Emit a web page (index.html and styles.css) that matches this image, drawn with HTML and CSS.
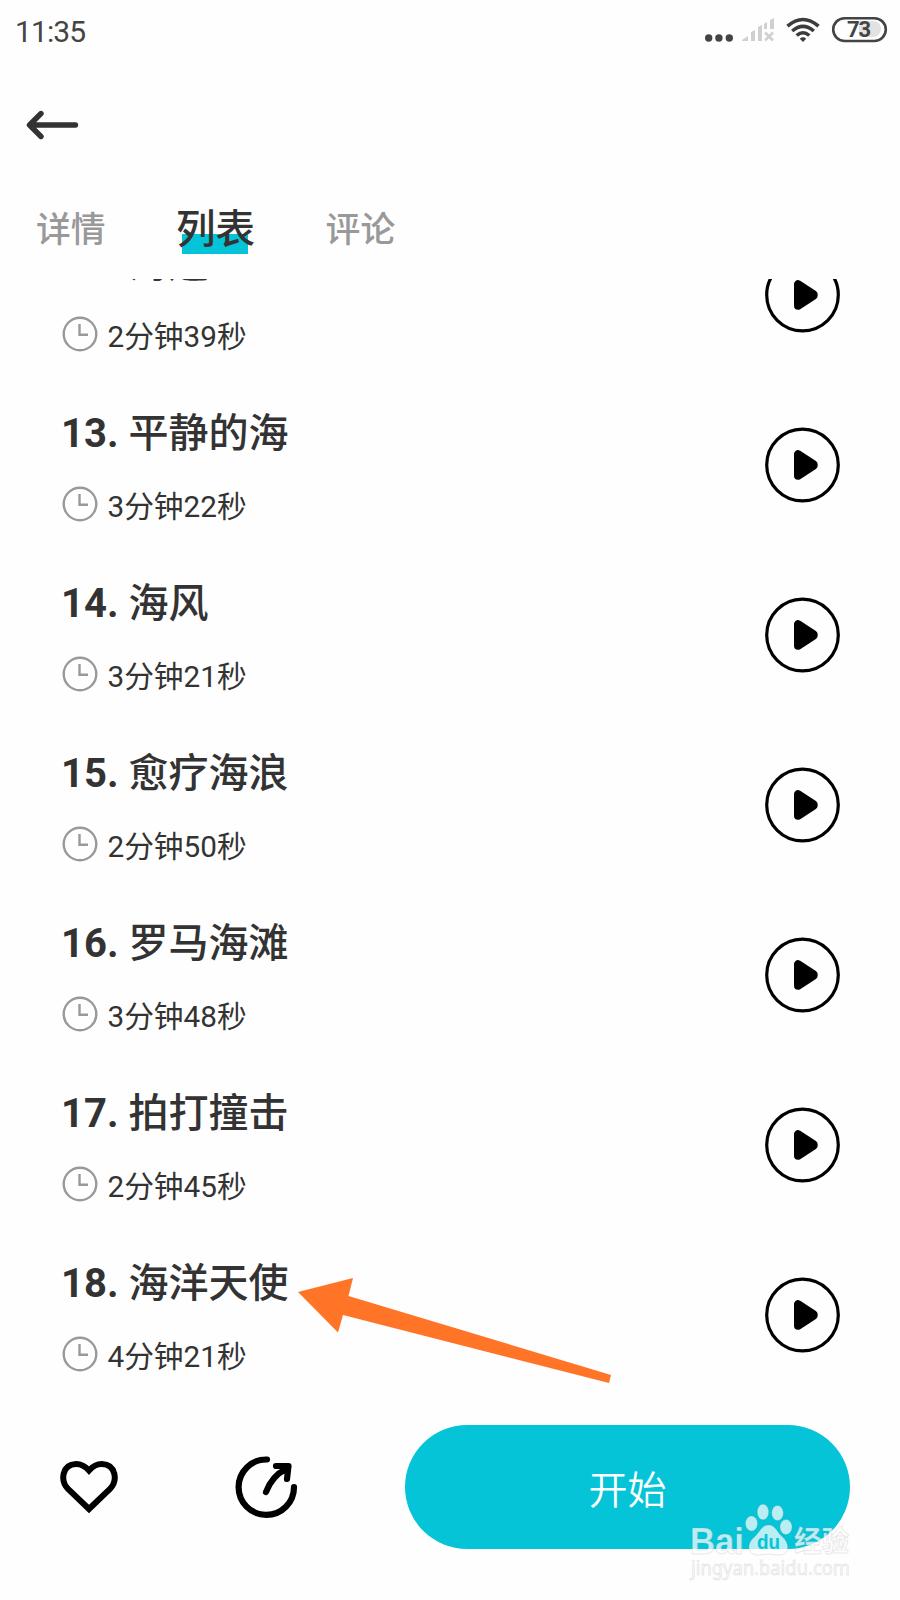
FILE: index.html
```html
<!DOCTYPE html>
<html lang="zh-CN">
<head>
  <meta charset="UTF-8">
  <meta name="viewport" content="width=device-width,initial-scale=1.0">
  <title>列表</title>
  <link rel="stylesheet" href="styles.css">
</head>
<body>

<svg class="defs" width="0" height="0">
  <symbol id="clock" viewBox="0 0 36 36">
    <circle cx="18" cy="18" r="16.3" fill="none" stroke="#999" stroke-width="2.4"/>
    <path d="M17.500 8v10.800h8.500" fill="none" stroke="#999" stroke-width="2.400"/>
  </symbol>
  <symbol id="play" viewBox="0 0 76 76">
    <circle cx="37.500" cy="38" r="35.8" fill="none" stroke="#000" stroke-width="3.200"/>
    <path d="M33 27.200v21.600L48.700 38.600v-1.200z" stroke="#000" stroke-width="8" stroke-linejoin="round"/>
  </symbol>
</svg>

<div class="page">
  <header class="status">
    <span class="time">11:35</span>
    <svg width="185" height="34" viewBox="0 0 185 34">
      <g fill="#444">
        <circle cx="3.700" cy="23" r="3.700"/>
        <circle cx="13.900" cy="23" r="3.700"/>
        <circle cx="24.300" cy="23" r="3.700"/>
      </g>
      <g fill="#d0d0d0">
        <path d="M37 26v-1l6-4v5zM46 26v-9l4-2v11zM53 26V12l4-2v16zM59 14V9l3-2v7zM65 14V5l4-2v11z"/>
        <path d="M60 17.500l8 8M68 17.500l-8 8" stroke="#d0d0d0" stroke-width="2.500"/>
      </g>
      <g fill="none" stroke="#3c3c3c" stroke-width="3.600">
        <path d="M82.500 11.200q15.500-13.400 31 0M87.200 16q10.800-9.400 21.600 0M91.700 20.500q6.300-5.500 12.600 0"/>
      </g>
      <path d="M98 27l-3.200-3.300q3.200-2.700 6.400 0z" fill="#3c3c3c"/>
      <path d="M154 6h14a8 8 0 0 1 0 16h-14z" fill="#e2e2e2"/>
      <rect x="128.200" y="3.200" width="52.600" height="22.800" rx="11.400" fill="none" stroke="#444" stroke-width="2.600"/>
      <text class="battery" x="153.500" y="22" text-anchor="middle">73</text>
    </svg>
  </header>

  <nav class="back">
    <svg width="54" height="30" viewBox="0 0 54 30" fill="none" stroke="#333" stroke-width="5.400" stroke-linecap="round" stroke-linejoin="round">
      <path d="M50.500 15H5M16 3.500L4.500 15 16 26.500"/>
    </svg>
  </nav>

  <div class="tabs">
    <span class="tab">详情</span>
    <span class="tab active">列表</span>
    <span class="tab">评论</span>
  </div>

  <div class="list" id="track-list"></div>

  <footer class="bottom">
    <svg class="heart" width="60" height="56" viewBox="0 0 60 56">
      <path d="M30 50L9 29.800C1 21.500 3 5.500 17 5 22 4.900 26 7 30 11.500 34 7 38 4.900 43 5 57 5.500 59 21.500 51 29.800z" fill="none" stroke="#000" stroke-width="6"/>
    </svg>
    <svg class="share" width="64" height="64" viewBox="0 0 64 64" fill="none" stroke="#000" stroke-width="6.200" stroke-linecap="round" stroke-linejoin="round">
      <path d="M33 4.500A27.700 27.700 0 1 0 60 32"/>
      <path d="M32 37Q38 21 52 14M42 11h12.500l-1.500 13"/>
    </svg>
    <button class="start">开始</button>
  </footer>

  <svg class="pointer" width="320" height="110" viewBox="0 0 320 110">
    <polygon points="0,14 55,0 50.500,18 313,97 311,105 45,37 40,54.500" fill="#ff7427"/>
  </svg>

  <svg class="watermark" width="170" height="84" viewBox="0 0 170 84">
    <g fill="#fff" fill-opacity=".72" stroke="#888" stroke-opacity=".2" stroke-width="1">
      <text class="wm-big" x="2" y="49.500" textLength="54" lengthAdjust="spacingAndGlyphs">Bai</text>
      <ellipse cx="63.500" cy="19.500" rx="6" ry="7.500"/>
      <ellipse cx="75" cy="8" rx="5.700" ry="7.800"/>
      <ellipse cx="89.500" cy="9" rx="5.800" ry="7.500"/>
      <ellipse cx="98" cy="23" rx="6" ry="7.500"/>
      <path d="M80.500 21c7 0 9 8 14 12 7 6 8 18-4 18-4 0-6-1-10-1s-6 1-10 1c-12 0-12-12-4-18 5-4 7-12 14-12z"/>
      <text class="wm-cn" x="106" y="48" textLength="55" lengthAdjust="spacingAndGlyphs">经验</text>
      <text class="wm-url" x="3" y="71" textLength="159" lengthAdjust="spacingAndGlyphs">jingyan.baidu.com</text>
    </g>
    <text class="wm-du" x="69" y="45" textLength="23" lengthAdjust="spacingAndGlyphs">du</text>
  </svg>
</div>

<script>
  const tracks = [
    [12, "海边", "2分钟39秒"],
    [13, "平静的海", "3分钟22秒"],
    [14, "海风", "3分钟21秒"],
    [15, "愈疗海浪", "2分钟50秒"],
    [16, "罗马海滩", "3分钟48秒"],
    [17, "拍打撞击", "2分钟45秒"],
    [18, "海洋天使", "4分钟21秒"]
  ];

  document.getElementById("track-list").innerHTML = tracks.map(([no, name, time]) => `
    <div class="track">
      <div class="info">
        <div class="title"><b>${no}. </b>${name}</div>
        <div class="duration"><svg width="36" height="36"><use href="#clock"/></svg><span>${time}</span></div>
      </div>
      <svg width="76" height="76"><use href="#play"/></svg>
    </div>
  `).join("");
</script>

</body>
</html>
```

FILE: styles.css
```css
* {
  box-sizing: border-box;
}
body {
  margin: 0;
  background: #fff;
  color: #333;
  font-family: Roboto, "Noto Sans CJK SC", sans-serif;
}
.defs {
  position: absolute;
}
.page {
  position: relative;
  width: 900px;
  height: 1600px;
  overflow: hidden;
  display: flex;
  flex-direction: column;
  background: #fefefe;
}
.status {
  height: 60px;
  padding: 15px 10px 0 15px;
  display: flex;
  justify-content: space-between;
}
.time {
  font-size: 30px;
  line-height: 34px;
  letter-spacing: -0.9px;
  color: #444;
}
.battery {
  font: bold 22px Roboto, sans-serif;
  letter-spacing: -1px;
  fill: #444;
}
.back {
  height: 130px;
  padding: 50px 0 0 25px;
}
.tabs {
  height: 89px;
  padding: 16px 0 0 36px;
  display: flex;
  gap: 70.500px;
  align-items: flex-start;
}
.tab {
  font-size: 34.800px;
  font-weight: 500;
  line-height: 48px;
  color: #999;
}
.active {
  padding-bottom: 2px;
  font-size: 39.500px;
  color: #333;
  background: linear-gradient(#06c4d8, #06c4d8) 6px 28px / 66px 20px no-repeat;
}
.list {
  height: 1121px;
  overflow: hidden;
  display: flex;
  flex-direction: column;
  justify-content: flex-end;
}
.track {
  flex: none;
  height: 170px;
  padding: 0 59px 0 61px;
  display: flex;
  align-items: center;
  justify-content: space-between;
}
.info {
  padding-bottom: 4px;
}
.title {
  font-size: 40px;
  font-weight: 500;
  line-height: 60px;
  white-space: pre;
}
.duration {
  display: flex;
  align-items: center;
  gap: 9.500px;
  margin-top: 22px;
  margin-left: 1px;
  font-size: 29.700px;
  line-height: 36px;
}
.duration span {
  padding-top: 3px;
  margin-bottom: -3px;
}
.bottom {
  height: 200px;
  padding: 25px 50px 0 59px;
  display: flex;
}
.heart {
  margin-top: 34px;
}
.share {
  margin: 30px 0 0 115px;
}
.start {
  width: 445px;
  height: 124px;
  margin-left: auto;
  border: none;
  border-radius: 62px;
  background: #06c4d8;
  color: #fff;
  font: 350 39px Roboto, "Noto Sans CJK SC", sans-serif;
}
.pointer {
  position: absolute;
  left: 298px;
  top: 1278px;
}
.watermark {
  position: absolute;
  left: 688px;
  top: 1504px;
  overflow: visible;
}
.wm-big {
  font: bold 37px "Liberation Sans", sans-serif;
}
.wm-cn {
  font: bold 29px "Noto Sans CJK SC", sans-serif;
}
.wm-url {
  font: 19px "Noto Sans", sans-serif;
}
.wm-du {
  font: bold 20px "Liberation Sans", sans-serif;
  fill: #06c4d8;
}
```
